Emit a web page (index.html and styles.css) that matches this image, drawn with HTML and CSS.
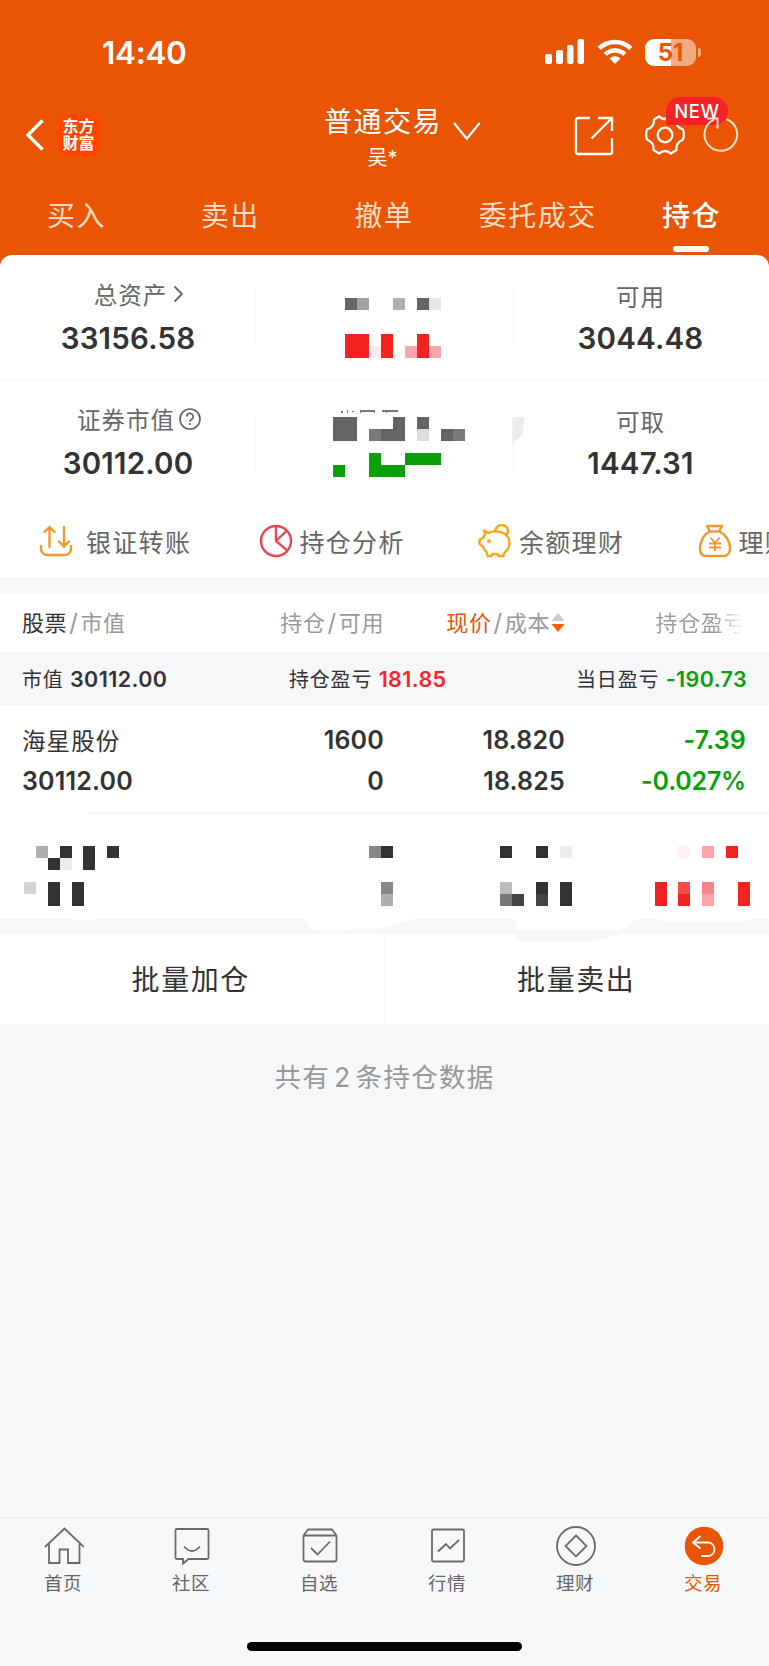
FILE: index.html
```html
<!DOCTYPE html>
<html lang="zh-CN">
<head>
    <meta charset="UTF-8">
    <meta name="viewport" content="width=device-width, initial-scale=1.0">
    <title>普通交易 - 持仓</title>
    <link rel="stylesheet" href="styles.css">
</head>
<body>

    <div class="top">
        <!-- Status bar -->
        <div class="status-bar">
            <span class="time">14:40</span>
            <div class="status-icons">
                <svg class="signal" width="40" height="26" viewBox="0 0 40 26" fill="#fff">
                    <rect x="0" y="15" width="7" height="10" rx="2"/>
                    <rect x="11" y="11" width="7" height="14" rx="2"/>
                    <rect x="22" y="6" width="6.5" height="19" rx="2"/>
                    <rect x="32.5" y="0" width="6.5" height="25" rx="2"/>
                </svg>
                <svg class="wifi" width="36" height="26" viewBox="0 0 36 26">
                    <g fill="none" stroke="#fff" stroke-width="4.6">
                        <path d="M2.2 9.4a22.6 22.6 0 0 1 31.6 0"/>
                        <path d="M8.2 15.4a14.2 14.2 0 0 1 19.6 0"/>
                    </g>
                    <path d="M18 25l-5.4-5.600a8 8 0 0 1 10.800 0z" fill="#fff"/>
                </svg>
                <div class="battery"><span>51</span></div>
            </div>
        </div>

        <!-- Title bar -->
        <div class="nav">
            <div class="nav-left">
                <svg width="20" height="32" viewBox="0 0 20 32" fill="none" stroke="#fff" stroke-width="3.4">
                    <path d="M17.5 1.5L3 16l14.5 14.5"/>
                </svg>
                <div class="logo">东方<br>财富</div>
            </div>
            <div class="nav-title">
                <h1>普通交易</h1>
                <p>吴*</p>
            </div>
            <svg class="nav-arrow" width="28" height="19" viewBox="0 0 28 19" fill="none" stroke="#fff" stroke-width="2.2">
                <path d="M1 1l12.800 15.700L26.600 1"/>
            </svg>
            <div class="nav-right">
                <svg class="icon-share" width="40" height="40" viewBox="0 0 40 40" fill="none" stroke="#fff" stroke-width="2.3">
                    <path d="M16 2H4a2 2 0 0 0-2 2v32a2 2 0 0 0 2 2h32a2 2 0 0 0 2-2V22"/>
                    <path d="M24 2h14v13M38 2L17.5 22.5"/>
                </svg>
                <div class="icon-gear">
                    <svg width="42" height="42" viewBox="0 0 42 42" fill="none" stroke="#fff" stroke-width="2.3" stroke-linejoin="round">
                        <path d="M15 2.5Q21 7.5 27 2.5L32 5.5Q31.5 13 39 15.5Q40.800 21 39 25.5Q31.5 29 32.5 36L27 39.5Q21 34.5 15 39.5L9.5 36Q10.5 29 3 25.5Q1.200 21 3 15.5Q10.5 13 10 5.5Z"/>
                        <circle cx="21" cy="21" r="7.3"/>
                    </svg>
                    <span class="badge">NEW</span>
                </div>
                <svg class="icon-refresh" width="36" height="38" viewBox="0 0 36 38" fill="none" stroke="#ffe3d2" stroke-width="2">
                    <path d="M23.5 4.2A16.3 16.3 0 1 1 11 4.7"/>
                    <path d="M4 3.5h10.500v10"/>
                </svg>
            </div>
        </div>

        <div class="tabs">
            <span>买入</span>
            <span>卖出</span>
            <span>撤单</span>
            <span>委托成交</span>
            <span class="active">持仓</span>
        </div>

        <!-- Assets -->
        <div class="assets">
            <div class="asset-row">
                <div class="asset">
                    <div class="asset-label first">总资产<svg class="more" width="11" height="18" viewBox="0 0 11 18" fill="none" stroke="#666" stroke-width="1.8"><path d="M1.5 1.5L9 9l-7.5 7.500"/></svg></div>
                    <div class="asset-value">33156.58</div>
                </div>
                <svg class="mosaic" width="257" height="125" viewBox="256 255 257 125" shape-rendering="crispEdges">
                    <path fill="#666" d="M345 298h12v12h-12zM417 298h12v12h-12z"/>
                    <path fill="#a3a3a3" d="M357 298h12v12h-12z"/>
                    <path fill="#b0b0b0" d="M393 298h12v12h-12z"/>
                    <path fill="#e8e8e8" d="M429 298h12v12h-12z"/>
                    <path fill="#f52222" d="M345 334h24v24h-24zM381 334h12v24h-12zM417 334h12v24h-12z"/>
                    <path fill="#fde8ea" d="M369 346h12v12h-12z"/>
                    <path fill="#f8a8ac" d="M405 346h12v12h-12zM429 346h12v12h-12z"/>
                </svg>
                <div class="asset">
                    <div class="asset-label low">可用</div>
                    <div class="asset-value">3044.48</div>
                </div>
            </div>
            <div class="asset-row">
                <div class="asset">
                    <div class="asset-label first">证券市值<svg class="help" width="22" height="22" viewBox="0 0 22 22" fill="none" stroke="#666" stroke-width="1.7"><circle cx="11" cy="11" r="10"/><path d="M7.800 8.600a3.200 3.200 0 1 1 4.800 2.700c-1.200.7-1.600 1.200-1.600 2.400"/><path d="M11 15v2"/></svg></div>
                    <div class="asset-value">30112.00</div>
                </div>
                <svg class="mosaic" width="269" height="125" viewBox="256 380 269 125" shape-rendering="crispEdges">
                    <path fill="#777" d="M341 411h2v2h-2zM347 410h1v3h-1zM352 411h2v1h-2zM360 410h15v2h-15zM360 410h1v3h-1zM374 410h1v3h-1zM382 410h16v2h-16zM386 411h1v2h-1z"/>
                    <path fill="#646464" d="M333 417h24v24h-24zM393 417h12v24h-12zM381 429h12v12h-12zM417 417h12v12h-12zM441 429h12v12h-12z"/>
                    <path fill="#787878" d="M369 429h12v12h-12zM453 429h12v12h-12z"/>
                    <path fill="#dcdcdc" d="M417 429h12v12h-12z"/>
                    <path fill="#0aa00a" d="M333 465h12v12h-12zM369 453h12v12h24v12h-36zM405 453h36v12h-36z"/>
                    <path fill="#ececec" d="M512 417h12l-1 16-11 11z"/>
                </svg>
                <div class="asset">
                    <div class="asset-label low">可取</div>
                    <div class="asset-value">1447.31</div>
                </div>
            </div>

            <!-- Shortcuts -->
            <div class="shortcuts">
                <div class="shortcut">
                    <svg width="34" height="34" viewBox="0 0 34 34" fill="none" stroke="#f09a2c" stroke-width="2.4" stroke-linecap="round">
                        <path d="M2 22v3a6 6 0 0 0 6 6h18a6 6 0 0 0 6-6v-3"/>
                        <path d="M10.500 23V3M5.500 8l5-5 5 5M25 3v20M20 17.500l5 5 5-5"/>
                    </svg>
                    <span class="wide">银证转账</span>
                </div>
                <div class="shortcut">
                    <svg width="34" height="34" viewBox="0 0 34 34" fill="none" stroke="#ee4452" stroke-width="2.4">
                        <circle cx="17" cy="17" r="15"/>
                        <path d="M17 2v15l11.500 9.800M17 17L28 6.500"/>
                    </svg>
                    <span>持仓分析</span>
                </div>
                <div class="shortcut">
                    <svg width="34" height="34" viewBox="0 0 34 34" fill="none" stroke="#f6a913" stroke-width="2.4" stroke-linejoin="round">
                        <path d="M6 6.500l4.500 2.500Q14 7 18 7.500c8 0 13.500 4.500 13.500 11.500 0 4-2 7.500-5 9.500l-1 3.500h-5l-.8-2h-5.200l-1 2H9.500L8.500 28Q6 26 5 22.500L1.500 20v-4l4-2.500Q6 11.500 7.300 10z"/>
                        <path d="M17.500 7.500A6.200 6.200 0 1 1 28 11.500"/>
                        <circle cx="11" cy="17" r=".8" fill="#f6a913"/>
                    </svg>
                    <span>余额理财</span>
                </div>
                <div class="shortcut">
                    <svg width="34" height="34" viewBox="0 0 34 34" fill="none" stroke="#f0972c" stroke-width="2.4" stroke-linejoin="round">
                        <path d="M12 7.500L9 2h15l-3 5.500zM12 7.500C6 10 2 17 2 24c0 5 2 8 5.500 8h18.500c3.500 0 6-3 6-8 0-7-4.500-14-11-16.500"/>
                        <path d="M12.500 13.500l4.500 5.500 4.500-5.500M17 19v8M11 19.500h12M11 23.500h12" stroke-width="1.8"/>
                    </svg>
                    <span>理财</span>
                </div>
            </div>
        </div>
    </div>

    <!-- Positions -->
    <div class="positions">
        <div class="row table-head">
            <span><b>股票</b><i>/</i>市值</span>
            <span>持仓<i>/</i>可用</span>
            <span class="sorted"><em>现价</em><i>/</i>成本<svg width="14" height="20" viewBox="0 0 14 20"><path d="M7 0l6.500 8H.5z" fill="#c8c8c8"/><path d="M.5 11h13L7 19z" fill="#fa5a0a"/></svg></span>
            <span class="fade">持仓盈亏</span>
        </div>
        <div class="summary">
            <span>市值 <b>30112.00</b></span>
            <span>持仓盈亏 <b class="red">181.85</b></span>
            <span>当日盈亏 <b class="green">-190.73</b></span>
        </div>
        <div class="row stock">
            <div><span class="name">海星股份</span><b>30112.00</b></div>
            <div><b>1600</b><b>0</b></div>
            <div><b>18.820</b><b>18.825</b></div>
            <div class="green"><b>-7.39</b><b class="percent">-0.027%</b></div>
        </div>
        <svg class="mosaic" width="769" height="129" viewBox="0 812 769 129" shape-rendering="crispEdges">
            <path fill="#f5f5f6" d="M88 812h681v1.500H88z"/>
            <path fill="#333" d="M60 846h12v12h-12zM48 858h12v12h-12zM83 846h12v24h-12zM107 846h12v12h-12zM48 882h12v24h-12zM72 882h12v24h-12z"/>
            <path fill="#aeaeae" d="M36 846h12v12h-12zM381 894h12v12h-12z"/>
            <path fill="#ececec" d="M60 858h12v12h-12zM560 846h12v12h-12z"/>
            <path fill="#d4d4d4" d="M24 882h12v12h-12z"/>
            <path fill="#888" d="M369 846h12v12h-12zM381 882h12v12h-12z"/>
            <path fill="#333" d="M381 846h12v12h-12zM500 846h12v12h-12zM536 846h12v12h-12zM536 882h12v12h-12zM560 882h12v24h-12z"/>
            <path fill="#bcbcbc" d="M500 882h12v12h-12z"/>
            <path fill="#777" d="M500 894h12v12h-12z"/>
            <path fill="#434343" d="M512 894h12v12h-12zM536 894h12v12h-12z"/>
            <path fill="#f52222" d="M726 846h12v12h-12zM655 882h12v24h-12zM678 894h12v12h-12zM738 882h12v24h-12z"/>
            <path fill="#f54c50" d="M678 882h12v12h-12z"/>
            <path fill="#f98488" d="M702 882h12v12h-12z"/>
            <path fill="#fba5a8" d="M702 846h12v12h-12zM702 894h12v12h-12z"/>
            <path fill="#fff0f3" d="M678 846h12v12h-12z"/>
            <path fill="#f7f7f8" d="M0 919h769v15H620l-24 7h-79v-7H0z"/>
            <g fill="#fff" shape-rendering="auto">
                <path d="M77 918h19v2q-8 1.500-19 0z"/>
                <path d="M307 918h107q-10 5-29 9-12 2-30 2-25 3-42 1-5-4-6-12z"/>
                <path d="M515 918h124q-6 3-12 8-4 4-12 4h-99z"/>
                <path d="M658 918h93q-4 4-18 4h-60q-9-1-15-4z"/>
            </g>
        </svg>
        <div class="batch">
            <div>批量加仓</div>
            <div>批量卖出</div>
        </div>
    </div>

    <div class="count">共有<span>2</span>条持仓数据</div>

    <!-- Bottom tab bar -->
    <div class="tab-bar">
        <div class="tab">
            <svg width="40" height="40" viewBox="0 0 40 40"><path d="M1 21L20.500 2.500 40 21M5 18v19h10.500V23.500H24V37h11.500V18"/></svg>
            <span>首页</span>
        </div>
        <div class="tab">
            <svg width="40" height="40" viewBox="0 0 40 40"><path d="M5 3h30a1.500 1.500 0 0 1 1.500 1.500v27A1.500 1.500 0 0 1 35 33H16.500L11 37.500V33H5a1.500 1.500 0 0 1-1.500-1.500v-27A1.500 1.500 0 0 1 5 3zM12 20.500q8 9 16 0"/></svg>
            <span>社区</span>
        </div>
        <div class="tab">
            <svg width="40" height="40" viewBox="0 0 40 40"><path d="M3.500 9.500l4.500-6h24l4.500 6v24a2 2 0 0 1-2 2h-29a2 2 0 0 1-2-2zM3.500 9.500h33M11 22l6.500 6.500L30 15.500"/></svg>
            <span>自选</span>
        </div>
        <div class="tab">
            <svg width="40" height="40" viewBox="0 0 40 40"><rect x="4" y="3.500" width="32" height="32" rx="1.500"/><path d="M10 25.500l8-7.500 4 4.500 9-8.500"/></svg>
            <span>行情</span>
        </div>
        <div class="tab">
            <svg width="40" height="40" viewBox="0 0 40 40"><circle cx="20" cy="20" r="19"/><path d="M20 9.500L30.500 20 20 30.500 9.500 20z"/></svg>
            <span>理财</span>
        </div>
        <div class="tab active">
            <svg width="40" height="40" viewBox="0 0 40 40"><circle cx="20" cy="20" r="19.300" fill="#e95504" stroke="none"/><path d="M16.500 10L9 16.500l7.500 6M9.500 16.500h15a6.800 6.800 0 0 1 0 13.500H17" stroke="#fff"/></svg>
            <span>交易</span>
        </div>
    </div>
    <div class="home-indicator"></div>

</body>
</html>
```
FILE: styles.css
```css
* {
    box-sizing: border-box;
}
body {
    margin: 0;
    width: 769px;
    height: 1666px;
    overflow: hidden;
    display: flex;
    flex-direction: column;
    font-family: Inter, "Noto Sans CJK SC", sans-serif;
    color: #333;
    background-color: #f7f8fa;
}
svg {
    display: block;
    flex-shrink: 0;
}
b, i, em {
    font-style: normal;
}
.top {
    background-color: #e95504;
    color: #fff;
}

/* Status bar */
.status-bar {
    height: 100px;
    padding: 4px 69px 0 102px;
    display: flex;
    justify-content: space-between;
    align-items: center;
}
.time {
    padding-top: 2px;
    font-size: 31.5px;
    font-weight: 600;
    line-height: 40px;
    letter-spacing: -0.3px;
}
.status-icons {
    display: flex;
    align-items: center;
}
.signal {
    margin-right: 12px;
}
.wifi {
    margin-right: 12px;
}
.battery {
    position: relative;
    width: 51px;
    height: 27px;
    margin-right: 4px;
    border-radius: 9px;
    background: linear-gradient(to right, #fff 26px, #f4aa80 26px);
    color: #e95504;
    font-size: 24px;
    font-weight: 700;
    line-height: 27px;
    text-align: center;
}
.battery::after {
    content: "";
    position: absolute;
    right: -5px;
    top: 9px;
    width: 3px;
    height: 9px;
    border-radius: 0 4px 4px 0;
    background-color: #f4aa80;
}

/* Title bar */
.nav {
    height: 78px;
    display: flex;
    align-items: flex-start;
}
.nav-left {
    width: 324px;
    padding: 14px 0 0 25px;
    display: flex;
    align-items: center;
    gap: 13px;
}
.logo {
    width: 41px;
    height: 42px;
    padding-top: 4px;
    border-radius: 8px;
    background-color: #ff4500;
    font-size: 16px;
    font-weight: 700;
    line-height: 17px;
    text-align: center;
}
.nav-title {
    width: 117px;
    text-align: center;
}
.nav-title h1 {
    margin: 0;
    padding-top: 2px;
    font-size: 28px;
    font-weight: 400;
    line-height: 40px;
    letter-spacing: 1.5px;
    white-space: nowrap;
}
.nav-title p {
    margin: 1px 0 0;
    font-size: 20px;
    line-height: 30px;
}
.nav-arrow {
    margin: 22px 0 0 12px;
}
.nav-right {
    margin-left: 93px;
    padding-top: 14px;
    display: flex;
}
.icon-share {
    margin-top: 2px;
}
.icon-gear {
    position: relative;
    margin-left: 30px;
}
.badge {
    position: absolute;
    left: 22px;
    top: -17px;
    width: 62px;
    height: 28px;
    border-radius: 14px 14px 14px 0;
    background-color: #f52328;
    font-size: 18.5px;
    font-weight: 500;
    line-height: 28px;
    letter-spacing: 0.6px;
    text-align: center;
}
.icon-refresh {
    position: relative;
    margin-left: 17px;
    margin-top: 1px;
}
.tabs {
    height: 77px;
    display: flex;
}
.tabs span {
    position: relative;
    flex: 1;
    padding: 18px 1px 0 0;
    color: #fddcc6;
    font-size: 28px;
    line-height: 40px;
    letter-spacing: 1.5px;
    text-align: center;
}
.tabs .active {
    color: #fff;
    font-weight: 500;
}
.tabs .active::after {
    content: "";
    position: absolute;
    left: 58px;
    bottom: 3px;
    width: 36px;
    height: 6px;
    border-radius: 3px;
    background-color: #fff;
}

/* Assets */
.assets {
    border-radius: 12px 12px 0 0;
    background-color: #fff;
    color: #333;
}
.asset-row {
    display: grid;
    grid-template-columns: 256px 257px 256px;
    height: 125px;
}
.asset-row + .asset-row {
    box-shadow: inset 0 1px #f5f5f5;
}
.asset {
    display: flex;
    flex-direction: column;
    align-items: center;
    padding-top: 21px;
    background: linear-gradient(#f6f6f6, #f6f6f6) no-repeat right 34px / 1px 57px;
}
.mosaic + .asset {
    padding-right: 1px;
    background-position: left 34px;
}
.asset-label {
    display: flex;
    align-items: center;
    height: 36px;
    color: #666;
    font-size: 23.5px;
    letter-spacing: 1px;
}
.asset-label.first {
    padding-left: 22px;
}
.asset-label.low {
    padding-top: 4px;
}
.more {
    margin-left: 6px;
}
.help {
    margin-left: 4px;
}
.asset-value {
    margin-top: 8px;
    font-size: 29.5px;
    font-weight: 600;
    line-height: 36px;
    letter-spacing: 0.2px;
}

/* Shortcuts */
.shortcuts {
    display: flex;
    height: 72px;
    overflow: hidden;
    padding-left: 39px;
}
.shortcut {
    flex: none;
    width: 219.5px;
    display: flex;
    align-items: center;
    gap: 7px;
    color: #666;
    font-size: 25px;
    letter-spacing: 1.3px;
}
.shortcut .wide {
    margin-left: 6px;
}

/* Positions */
.positions {
    border-top: 17px solid #f7f7f8;
    background-color: #fff;
}
.row {
    display: grid;
    grid-template-columns: 222px 140px 181px 181px;
    padding-left: 22px;
    text-align: right;
}
.row > :first-child {
    text-align: left;
}
.table-head {
    height: 58px;
    line-height: 58px;
    color: #999;
    font-size: 22px;
    letter-spacing: 0.6px;
}
.table-head b {
    color: #333;
    font-weight: 400;
}
.table-head em {
    color: #e95504;
}
.table-head i {
    margin: 0 2px;
    font-size: 24px;
}
.sorted {
    display: flex;
    justify-content: flex-end;
    align-items: center;
    padding-left: 20px;
}
.sorted svg {
    margin-left: 1px;
}
.table-head .fade {
    background: linear-gradient(to right, #999 150px, #fff 178px);
    -webkit-background-clip: text;
    background-clip: text;
    color: transparent;
}
.summary {
    display: flex;
    height: 53px;
    padding-left: 22px;
    background-color: #f7f7fa;
    font-size: 20px;
    line-height: 54px;
    letter-spacing: 0.8px;
    white-space: nowrap;
}
.summary span {
    width: 267px;
}
.summary span:nth-child(2) {
    width: 160px;
}
.summary span:nth-child(3) {
    width: 298px;
    text-align: right;
}
.summary b {
    font-size: 21.5px;
    font-weight: 600;
    letter-spacing: 0.4px;
}
.red {
    color: #f02828;
}
.green {
    color: #0aa00a;
}
.stock {
    height: 107px;
    padding-top: 15px;
    font-size: 25px;
    letter-spacing: 0.2px;
}
.stock b, .stock .name {
    display: block;
    height: 41px;
    font-weight: 600;
    line-height: 41px;
}
.stock .percent {
    letter-spacing: -0.2px;
}
.stock .name {
    padding-top: 1px;
    font-size: 23.5px;
    font-weight: 400;
    letter-spacing: 1.1px;
}
.batch {
    display: flex;
    height: 90px;
    margin-top: -7px;
}
.batch div {
    flex: 1;
    padding-right: 2px;
    font-size: 28px;
    line-height: 93px;
    letter-spacing: 1.6px;
    text-align: center;
}
.batch div:first-child {
    border-right: 2px solid #f7f7f8;
}
.count {
    padding-top: 33px;
    color: #999;
    font-size: 26.5px;
    line-height: 40px;
    letter-spacing: 1.3px;
    text-align: center;
}
.count span {
    margin: 0 4px;
}

/* Bottom tab bar */
.tab-bar {
    margin-top: auto;
    height: 125px;
    padding: 8px 1px 0 0;
    border-top: 1px solid #e6e8ec;
    display: grid;
    grid-template-columns: repeat(6, 1fr);
}
.tab {
    display: flex;
    flex-direction: column;
    align-items: center;
    color: #666;
    font-size: 18.5px;
    line-height: 28px;
    letter-spacing: 0.5px;
}
.tab svg {
    fill: none;
    stroke: #6a6a6c;
    stroke-width: 1.8;
    margin-bottom: 3px;
}
.tab span {
    margin-right: 2px;
}
.tab.active {
    color: #e95504;
}
.home-indicator {
    width: 275px;
    height: 9px;
    margin: 0 auto 15px;
    flex-shrink: 0;
    border-radius: 5px;
    background-color: #000;
}
```
